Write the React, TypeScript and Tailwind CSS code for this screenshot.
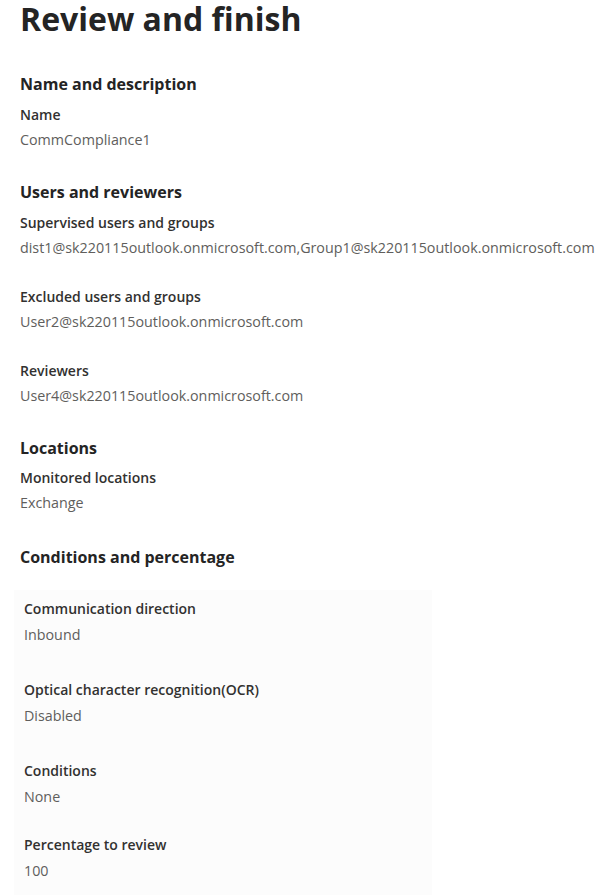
import React from 'react'

const FONT = "font-['Open_Sans','Noto_Sans',sans-serif]"

function Heading({ children, className = '' }: { children: React.ReactNode; className?: string }) {
  return (
    <h2 className={`text-[16px] leading-[22px] font-bold text-[#242424] ${className}`}>
      {children}
    </h2>
  )
}

interface FieldProps {
  label: string
  value: string
  className?: string
  wide?: boolean
}

function Field({ label, value, className = '', wide = false }: FieldProps) {
  return (
    <div className={className}>
      <div className="text-[14px] leading-[20px] font-semibold text-[#323130]">{label}</div>
      <div className={`${wide ? 'mt-[6px]' : 'mt-[5px]'} text-[14.3px] leading-[20px] text-[#605e5c]`}>
        {value}
      </div>
    </div>
  )
}

export default function App() {
  return (
    <div className={`${FONT} bg-white w-[604px] h-[895px] overflow-hidden`}>
      <div className="pl-5">
        <h1 className="text-[32px] leading-[38px] font-bold text-[#242424]">Review and finish</h1>

        {/* Name and description */}
        <Heading className="mt-[35px]">Name and description</Heading>
        <Field className="mt-[10px]" label="Name" value="CommCompliance1" />

        {/* Users and reviewers */}
        <Heading className="mt-[31px]">Users and reviewers</Heading>
        <Field
          className="mt-[10px]"
          label="Supervised users and groups"
          value="dist1@sk220115outlook.onmicrosoft.com,Group1@sk220115outlook.onmicrosoft.com"
        />
        <Field className="mt-[29px]" label="Excluded users and groups" value="User2@sk220115outlook.onmicrosoft.com" />
        <Field className="mt-[29px]" label="Reviewers" value="User4@sk220115outlook.onmicrosoft.com" />

        {/* Locations */}
        <Heading className="mt-[31px]">Locations</Heading>
        <Field className="mt-[9px]" label="Monitored locations" value="Exchange" />

        {/* Conditions and percentage */}
        <Heading className="mt-[33px]">Conditions and percentage</Heading>
      </div>

      <div className="ml-[14px] w-[418px] mt-[22px] pt-[9px] pl-[10px] bg-[#fcfcfc] h-[400px]">
        <Field wide label="Communication direction" value="Inbound" />
        <Field wide className="mt-[35px]" label="Optical character recognition(OCR)" value="Disabled" />
        <Field wide className="mt-[35px]" label="Conditions" value="None" />
        <Field wide className="mt-[28px]" label="Percentage to review" value="100" />
      </div>
    </div>
  )
}
